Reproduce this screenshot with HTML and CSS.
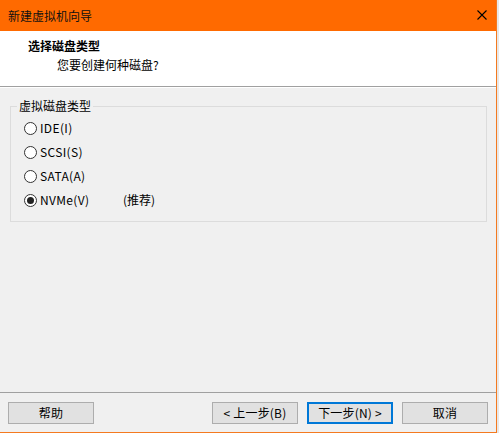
FILE: index.html
```html
<!DOCTYPE html>
<html lang="zh-CN">
<head>
<meta charset="utf-8">
<title>新建虚拟机向导</title>
<link rel="stylesheet" href="styles.css">
</head>
<body>
<div class="window">
  <div class="titlebar">
    <span class="title">新建虚拟机向导</span>
    <svg class="close" width="10" height="10" viewBox="0 0 10 10"><path d="M0.5 0.5 L9.5 9.5 M9.5 0.5 L0.5 9.5" stroke="#000" stroke-width="1.1" fill="none"/></svg>
  </div>
  <div class="header">
    <div class="h-title">选择磁盘类型</div>
    <div class="h-sub">您要创建何种磁盘?</div>
  </div>
  <div class="content">
    <fieldset class="group">
      <legend class="legend">虚拟磁盘类型</legend>
      <div class="options">
        <div class="opt"><span class="radio"></span><span class="label">IDE(I)</span></div>
        <div class="opt"><span class="radio"></span><span class="label">SCSI(S)</span></div>
        <div class="opt"><span class="radio"></span><span class="label">SATA(A)</span></div>
        <div class="opt"><span class="radio checked"></span><span class="label nv">NVMe(V)</span><span class="rec">(推荐)</span></div>
      </div>
    </fieldset>
  </div>
  <div class="footer">
    <button class="btn">帮助</button>
    <div class="spacer"></div>
    <button class="btn">&lt; 上一步(B)</button>
    <button class="btn primary">下一步(N) &gt;</button>
    <button class="btn">取消</button>
  </div>
</div>
</body>
</html>
```
FILE: styles.css
```css
html, body {
  margin: 0;
  padding: 0;
  background: #e8e8e8;
}
body {
  font-family: "Noto Sans CJK SC", "Microsoft YaHei", sans-serif;
  font-size: 12px;
  color: #000;
}
.window {
  width: 496px;
  height: 432px;
  border-right: 1px solid #f47a20;
  border-bottom: 1px solid #f47a20;
  background: #f0f0f0;
  display: flex;
  flex-direction: column;
}
.titlebar {
  height: 31px;
  background: #ff6a00;
  display: flex;
  align-items: center;
  justify-content: space-between;
  padding: 0 9px 0 8px;
  flex: none;
}
.title {
  line-height: 16px;
  color: #111;
}
.close {
  display: block;
  margin-top: -1px;
}
.header {
  height: 56px;
  background: #fff;
  border-bottom: 1px solid #a0a0a0;
  box-shadow: 0 1px 0 #fff;
  padding: 7px 0 0 28px;
  box-sizing: border-box;
  flex: none;
}
.h-title {
  font-weight: bold;
  line-height: 16px;
}
.h-sub {
  line-height: 16px;
  margin-top: 3px;
  padding-left: 29px;
}
.content {
  flex: 1;
  padding: 11px 10px 0 10px;
}
.group {
  margin: 0;
  padding: 0 0 9px 0;
  border: 1px solid #dcdcdc;
  width: 477px;
  box-sizing: border-box;
}
.legend {
  padding: 0 2px;
  margin-left: 6px;
  line-height: 16px;
}
.options {
  padding: 2px 0 0 13px;
}
.opt {
  height: 24px;
  display: flex;
  align-items: center;
}
.radio {
  width: 11px;
  height: 11px;
  border: 1px solid #333;
  border-radius: 50%;
  background: #fff;
  box-sizing: content-box;
  display: flex;
  align-items: center;
  justify-content: center;
  flex: none;
}
.radio.checked::after {
  content: "";
  width: 7px;
  height: 7px;
  border-radius: 50%;
  background: #222;
}
.label {
  margin-left: 3px;
  line-height: 16px;
  letter-spacing: 0.35px;
}
.nv {
  width: 83px;
}
.rec {
  line-height: 16px;
}
.footer {
  flex: none;
  height: 40px;
  border-top: 1px solid #a0a0a0;
  box-sizing: border-box;
  display: flex;
  align-items: flex-start;
  padding: 9px 8px 0 8px;
  gap: 9px;
}
.spacer {
  flex: 1;
}
.btn {
  width: 86px;
  height: 22px;
  background: #e1e1e1;
  border: 1px solid #adadad;
  font-family: "Noto Sans CJK SC", "Microsoft YaHei", sans-serif;
  font-size: 12px;
  color: #000;
  padding: 0;
  line-height: 18px;
  margin: 0;
  letter-spacing: 0.2px;
}
.btn.primary {
  border: 2px solid #0078d7;
}
```
